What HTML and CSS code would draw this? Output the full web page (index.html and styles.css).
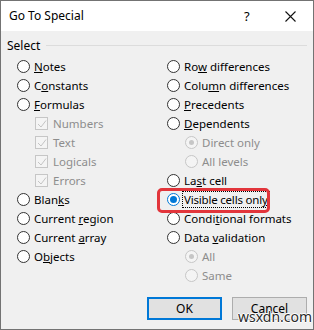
FILE: index.html
```html
<!DOCTYPE html>
<html lang="en">
<head>
  <meta charset="UTF-8">
  <title>Go To Special</title>
  <link rel="stylesheet" href="styles.css">
</head>
<body>

  <div class="dialog">
    <div class="titlebar">
      <span class="judul">Go To Special</span>
      <span class="tombol-help">?</span>
      <span class="tombol-tutup">
        <svg width="11" height="11" viewBox="0 0 11 11"><path d="M0.5 0.5 L10.5 10.5 M10.5 0.5 L0.5 10.5" stroke="#111" stroke-width="1.1" fill="none"/></svg>
      </span>
    </div>

    <div class="isi">
      <div class="grup-judul">
        <span>Select</span>
        <div class="garis"></div>
      </div>

      <div class="kolom-wrap">
        <!-- kolom kiri -->
        <div class="kolom">
          <div class="opsi"><span class="radio"></span><span><u>N</u>otes</span></div>
          <div class="opsi"><span class="radio"></span><span>C<u>o</u>nstants</span></div>
          <div class="opsi"><span class="radio"></span><span><u>F</u>ormulas</span></div>
          <div class="opsi sub mati"><span class="cek"><svg width="10" height="10" viewBox="0 0 10 10"><path d="M1 5 L4 8 L9 1.5" stroke="#c4c4c4" stroke-width="1" fill="none"/></svg></span><span>Numbers</span></div>
          <div class="opsi sub mati"><span class="cek"><svg width="10" height="10" viewBox="0 0 10 10"><path d="M1 5 L4 8 L9 1.5" stroke="#c4c4c4" stroke-width="1" fill="none"/></svg></span><span>Text</span></div>
          <div class="opsi sub mati"><span class="cek"><svg width="10" height="10" viewBox="0 0 10 10"><path d="M1 5 L4 8 L9 1.5" stroke="#c4c4c4" stroke-width="1" fill="none"/></svg></span><span>Logicals</span></div>
          <div class="opsi sub mati"><span class="cek"><svg width="10" height="10" viewBox="0 0 10 10"><path d="M1 5 L4 8 L9 1.5" stroke="#c4c4c4" stroke-width="1" fill="none"/></svg></span><span>Errors</span></div>
          <div class="opsi"><span class="radio"></span><span>Blan<u>k</u>s</span></div>
          <div class="opsi"><span class="radio"></span><span>Current <u>r</u>egion</span></div>
          <div class="opsi"><span class="radio"></span><span>Current <u>a</u>rray</span></div>
          <div class="opsi"><span class="radio"></span><span>O<u>b</u>jects</span></div>
        </div>

        <!-- kolom kanan -->
        <div class="kolom">
          <div class="opsi"><span class="radio"></span><span>Ro<u>w</u> differences</span></div>
          <div class="opsi"><span class="radio"></span><span>Colu<u>m</u>n differences</span></div>
          <div class="opsi"><span class="radio"></span><span><u>P</u>recedents</span></div>
          <div class="opsi"><span class="radio"></span><span><u>D</u>ependents</span></div>
          <div class="opsi sub mati"><span class="radio isi-titik"></span><span>Direct only</span></div>
          <div class="opsi sub mati"><span class="radio"></span><span>All levels</span></div>
          <div class="opsi"><span class="radio"></span><span>La<u>s</u>t cell</span></div>
          <div class="opsi dipilih"><span class="radio"></span><span class="fokus">Visible cells onl<u>y</u></span></div>
          <div class="opsi"><span class="radio"></span><span>Condi<u>t</u>ional formats</span></div>
          <div class="opsi"><span class="radio"></span><span>Data <u>v</u>alidation</span></div>
          <div class="opsi sub mati"><span class="radio isi-titik"></span><span>All</span></div>
          <div class="opsi sub mati"><span class="radio"></span><span>Same</span></div>
        </div>
      </div>

      <div class="tombol-bar">
        <button class="btn btn-ok">OK</button>
        <button class="btn">Cancel</button>
      </div>
    </div>

    <!-- tanda merah & watermark -->
    <div class="sorotan"></div>
    <div class="watermark">wsxdn.com</div>
  </div>

</body>
</html>
```

FILE: styles.css
```css
body {
  margin: 0;
  font-family: "Noto Sans", "Open Sans", sans-serif;
  font-size: 12px;
  color: #000;
}

.dialog {
  position: relative;
  width: 312px;
  height: 328px;
  border: 1px solid #737373;
  background: #f0f0f0;
  display: flex;
  flex-direction: column;
  overflow: hidden;
}

.titlebar {
  height: 30px;
  background: white;
  display: flex;
  align-items: center;
  padding-left: 8px;
}

.judul {
  flex: 1;
  font-size: 12px;
  padding-bottom: 2px;
}

.tombol-help {
  width: 12px;
  margin-right: 29px;
  font-size: 13px;
}

.tombol-tutup {
  width: 11px;
  height: 11px;
  margin-right: 17px;
  display: flex;
}

.isi {
  flex: 1;
  display: flex;
  flex-direction: column;
  padding: 6px 6px 9px 6px;
}

.grup-judul {
  display: flex;
  align-items: center;
  height: 16px;
}

.grup-judul span {
  margin-right: 6px;
}

.garis {
  flex: 1;
  height: 1px;
  background: #dcdcdc;
}

.kolom-wrap {
  display: grid;
  grid-template-columns: 150px 1fr;
  padding-left: 10px;
  margin-top: 4px;
  font-size: 11.5px;
}

.opsi {
  height: 19px;
  display: flex;
  align-items: center;
}

.opsi.sub {
  padding-left: 18px;
}

.opsi.mati {
  color: #8d8d8d;
}

.radio {
  width: 11px;
  height: 11px;
  border: 1px solid #333;
  border-radius: 50%;
  background: white;
  margin-right: 4px;
  flex-shrink: 0;
  display: flex;
  align-items: center;
  justify-content: center;
}

.mati .radio {
  border-color: #c6c6c6;
  background: #f4f4f4;
}

.isi-titik::after {
  content: "";
  width: 5px;
  height: 5px;
  border-radius: 50%;
  background: #c6c6c6;
}

.dipilih .radio {
  border-color: #0078d7;
}

.dipilih .radio::after {
  content: "";
  width: 7px;
  height: 7px;
  border-radius: 50%;
  background: #0078d7;
}

.fokus {
  outline: 1px dotted #000;
  outline-offset: 0;
  margin-left: -1px;
  padding: 0 1px;
  letter-spacing: -0.2px;
}

.cek {
  width: 11px;
  height: 11px;
  border: 1px solid #c6c6c6;
  background: #f4f4f4;
  margin-right: 5px;
  flex-shrink: 0;
  display: flex;
  align-items: center;
  justify-content: center;
}

.tombol-bar {
  margin-top: auto;
  display: flex;
  justify-content: flex-end;
  gap: 10px;
}

.btn {
  width: 75px;
  height: 23px;
  font-family: inherit;
  font-size: 12px;
  background: #e1e1e1;
  border: 1px solid #adadad;
  padding: 0;
}

.btn-ok {
  border: 2px solid #0078d7;
}

.sorotan {
  position: absolute;
  left: 156px;
  top: 187px;
  width: 107px;
  height: 19px;
  border: 3px solid #e2353b;
  border-radius: 5px;
}

.watermark {
  position: absolute;
  left: 237px;
  top: 306px;
  font-size: 14px;
  color: #2b2b2b;
  text-shadow: 1px 0 0 #fff, -1px 0 0 #fff, 0 1px 0 #fff, 0 -1px 0 #fff;
}
```
